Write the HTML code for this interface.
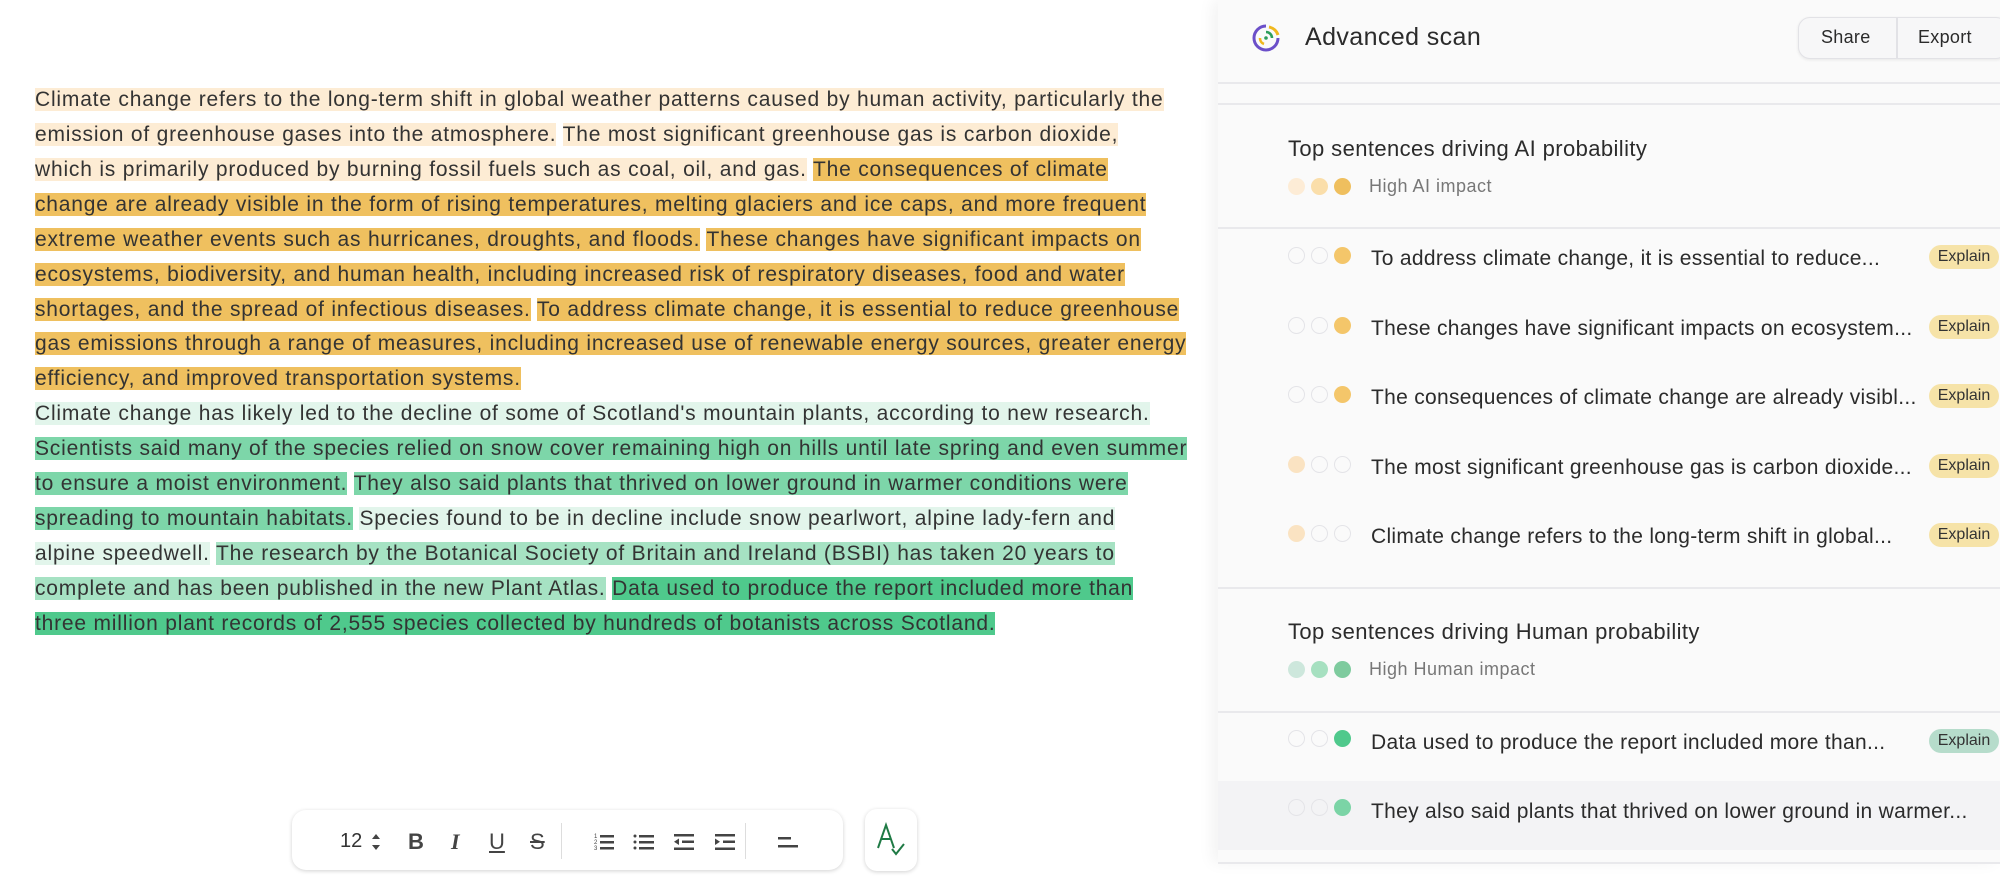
<!DOCTYPE html>
<html><head><meta charset="utf-8"><style>
*{margin:0;padding:0;box-sizing:border-box}
body{width:2000px;height:881px;background:#fff;position:relative;overflow:hidden;font-family:"Liberation Sans",sans-serif;color:#333}
.ln{position:absolute;left:35px;height:25px;line-height:25px;font-size:21px;letter-spacing:.8px;white-space:nowrap;color:#333}
.lo{background:#fdecd4}.or{background:#efc05f}.lg{background:#e2f5eb}.mg{background:#7dd6a9}.ml{background:#a6e2c3}.dg{background:#4fc98c}
#panel{position:absolute;left:1218px;top:0;width:782px;height:863px;background:#fafafa;box-shadow:-6px 0 14px rgba(0,0,0,.05)}
.hl{position:absolute;left:0;width:782px;height:2px;background:#e9e9ec}
.t{position:absolute;font-size:21px;letter-spacing:.3px;color:#2b2b2b;white-space:nowrap}
.h{font-size:22px;letter-spacing:.4px}
.s{font-size:18px;letter-spacing:.5px;color:#777}
.dot{position:absolute;width:17px;height:17px;border-radius:50%}
.e{border:1.5px solid #e4e4e8}
.exp{position:absolute;left:711px;width:70px;height:24px;border-radius:12px;font-size:16px;line-height:24px;text-align:center;color:#333}
.ic{position:absolute;top:828px}
</style></head><body>
<div class="ln" style="top:87px"><span class="lo">Climate change refers to the long-term shift in global weather patterns caused by human activity, particularly the</span></div>
<div class="ln" style="top:122px"><span class="lo">emission of greenhouse gases into the atmosphere.</span> <span class="lo">The most significant greenhouse gas is carbon dioxide,</span></div>
<div class="ln" style="top:157px"><span class="lo">which is primarily produced by burning fossil fuels such as coal, oil, and gas.</span> <span class="or">The consequences of climate</span></div>
<div class="ln" style="top:192px"><span class="or">change are already visible in the form of rising temperatures, melting glaciers and ice caps, and more frequent</span></div>
<div class="ln" style="top:227px"><span class="or">extreme weather events such as hurricanes, droughts, and floods.</span> <span class="or">These changes have significant impacts on</span></div>
<div class="ln" style="top:262px"><span class="or">ecosystems, biodiversity, and human health, including increased risk of respiratory diseases, food and water</span></div>
<div class="ln" style="top:297px"><span class="or">shortages, and the spread of infectious diseases.</span> <span class="or">To address climate change, it is essential to reduce greenhouse</span></div>
<div class="ln" style="top:331px"><span class="or">gas emissions through a range of measures, including increased use of renewable energy sources, greater energy</span></div>
<div class="ln" style="top:366px"><span class="or">efficiency, and improved transportation systems.</span></div>
<div class="ln" style="top:401px"><span class="lg">Climate change has likely led to the decline of some of Scotland's mountain plants, according to new research.</span></div>
<div class="ln" style="top:436px"><span class="mg">Scientists said many of the species relied on snow cover remaining high on hills until late spring and even summer</span></div>
<div class="ln" style="top:471px"><span class="mg">to ensure a moist environment.</span> <span class="mg">They also said plants that thrived on lower ground in warmer conditions were</span></div>
<div class="ln" style="top:506px"><span class="mg">spreading to mountain habitats.</span> <span class="lg">Species found to be in decline include snow pearlwort, alpine lady-fern and</span></div>
<div class="ln" style="top:541px"><span class="lg">alpine speedwell.</span> <span class="ml">The research by the Botanical Society of Britain and Ireland (BSBI) has taken 20 years to</span></div>
<div class="ln" style="top:576px"><span class="ml">complete and has been published in the new Plant Atlas.</span> <span class="dg">Data used to produce the report included more than</span></div>
<div class="ln" style="top:611px"><span class="dg">three million plant records of 2,555 species collected by hundreds of botanists across Scotland.</span></div>

<!-- toolbar -->
<div style="position:absolute;left:292px;top:810px;width:551px;height:60px;border-radius:14px;background:#fff;box-shadow:0 1px 4px rgba(0,0,0,.18)"></div>
<div style="position:absolute;left:865px;top:809px;width:52px;height:62px;border-radius:12px;background:#fff;box-shadow:0 1px 4px rgba(0,0,0,.18)"></div>
<div style="position:absolute;left:340px;top:830px;font-size:20px;color:#333">12</div>
<svg class="ic" style="left:368px" width="16" height="28" viewBox="0 0 16 28"><path d="M4 11 L8 6 L12 11Z M4 17 L8 22 L12 17Z" fill="#444"/></svg>
<div style="position:absolute;left:408px;top:829px;font-size:22px;font-weight:bold;color:#444">B</div>
<div style="position:absolute;left:451px;top:829px;font-size:22px;font-style:italic;font-family:'Liberation Serif',serif;font-weight:bold;color:#444">I</div>
<div style="position:absolute;left:489px;top:829px;font-size:22px;text-decoration:underline;color:#444">U</div>
<div style="position:absolute;left:530px;top:829px;font-size:22px;text-decoration:line-through;color:#444">S</div>
<div style="position:absolute;left:561px;top:823px;width:1px;height:36px;background:#ddd"></div>
<div style="position:absolute;left:745px;top:823px;width:1px;height:36px;background:#ddd"></div>
<svg class="ic" style="left:593px" width="22" height="28" viewBox="0 0 22 28"><g fill="#444"><rect x="7" y="7" width="14" height="2.5"/><rect x="7" y="13" width="14" height="2.5"/><rect x="7" y="19" width="14" height="2.5"/></g><text x="1" y="10" font-size="6" fill="#444">1</text><text x="1" y="16" font-size="6" fill="#444">2</text><text x="1" y="22" font-size="6" fill="#444">3</text></svg>
<svg class="ic" style="left:633px" width="22" height="28" viewBox="0 0 22 28"><g fill="#444"><circle cx="2" cy="8" r="1.5"/><circle cx="2" cy="14" r="1.5"/><circle cx="2" cy="20" r="1.5"/><rect x="6" y="7" width="15" height="2.5"/><rect x="6" y="13" width="15" height="2.5"/><rect x="6" y="19" width="15" height="2.5"/></g></svg>
<svg class="ic" style="left:673px" width="22" height="28" viewBox="0 0 22 28"><g fill="#444"><rect x="1" y="6" width="20" height="2.5"/><rect x="9" y="12.5" width="12" height="2.5"/><rect x="1" y="19.5" width="20" height="2.5"/><path d="M1 13.8 L6 10.5 L6 17Z"/></g></svg>
<svg class="ic" style="left:714px" width="22" height="28" viewBox="0 0 22 28"><g fill="#444"><rect x="1" y="6" width="20" height="2.5"/><rect x="9" y="12.5" width="12" height="2.5"/><rect x="1" y="19.5" width="20" height="2.5"/><path d="M6 13.8 L1 10.5 L1 17Z"/></g></svg>
<svg class="ic" style="left:777px" width="22" height="28" viewBox="0 0 22 28"><g fill="#444"><rect x="1" y="9" width="13" height="2.5"/><rect x="1" y="17" width="20" height="2.5"/></g></svg>
<svg style="position:absolute;left:875px;top:822px" width="34" height="36" viewBox="0 0 34 36"><path d="M3 26 L11 3 L19 26 M6 17 L16 17" stroke="#1f7a45" stroke-width="2" fill="none"/><path d="M17 27 L21 32 L29 22" stroke="#1f7a45" stroke-width="2" fill="none"/></svg>

<div id="panel">
  <svg style="position:absolute;left:34px;top:24px" width="28" height="28" viewBox="0 0 28 28"><path d="M14 2 A12 12 0 1 0 26 14" stroke="#6b4fc9" stroke-width="3" fill="none"/><path d="M17 3 A12 12 0 0 1 26 11" stroke="#f0b81e" stroke-width="3" fill="none"/><path d="M14 8 A6 6 0 0 1 20 14" stroke="#2e9e5a" stroke-width="2.6" fill="none"/><path d="M8 14 A6 6 0 0 0 12 20" stroke="#f0b81e" stroke-width="2.6" fill="none"/><circle cx="14" cy="14" r="1.8" fill="#2e9e5a"/></svg>
  <div class="t" style="left:87px;top:23px;font-size:25px;letter-spacing:.4px;color:#2b2b2b">Advanced scan</div>
  <div style="position:absolute;left:580px;top:17px;width:210px;height:42px;border:1.5px solid #e2e2e6;border-radius:12px;background:#f7f7f8;box-shadow:0 1px 3px rgba(0,0,0,.08)"></div>
  <div style="position:absolute;left:678px;top:18px;width:2px;height:40px;background:#e2e2e6"></div>
  <div class="t" style="left:603px;top:27px;font-size:18px">Share</div>
  <div class="t" style="left:700px;top:27px;font-size:18px">Export</div>
  <div class="hl" style="top:82px"></div>
  <div class="hl" style="top:103px;height:1.5px"></div>

  <div class="t h" style="left:70px;top:136px">Top sentences driving AI probability</div>
  <div class="dot" style="left:70px;top:178px;background:#fdecd6"></div>
  <div class="dot" style="left:93px;top:178px;background:#fadeaa"></div>
  <div class="dot" style="left:116px;top:178px;background:#efbf5e"></div>
  <div class="t s" style="left:151px;top:176px">High AI impact</div>
  <div class="hl" style="top:227px"></div>

  <div class="dot e" style="left:70px;top:247px"></div><div class="dot e" style="left:93px;top:247px"></div><div class="dot" style="left:116px;top:247px;background:#f4c66a"></div>
  <div class="t" style="left:153px;top:247px">To address climate change, it is essential to reduce...</div>
  <div class="exp" style="top:245px;background:#f6e3a8">Explain</div>

  <div class="dot e" style="left:70px;top:317px"></div><div class="dot e" style="left:93px;top:317px"></div><div class="dot" style="left:116px;top:317px;background:#f4c66a"></div>
  <div class="t" style="left:153px;top:317px">These changes have significant impacts on ecosystem...</div>
  <div class="exp" style="top:315px;background:#f6e3a8">Explain</div>

  <div class="dot e" style="left:70px;top:386px"></div><div class="dot e" style="left:93px;top:386px"></div><div class="dot" style="left:116px;top:386px;background:#f4c66a"></div>
  <div class="t" style="left:153px;top:386px">The consequences of climate change are already visibl...</div>
  <div class="exp" style="top:384px;background:#f6e3a8">Explain</div>

  <div class="dot" style="left:70px;top:456px;background:#fae3c2"></div><div class="dot e" style="left:93px;top:456px"></div><div class="dot e" style="left:116px;top:456px"></div>
  <div class="t" style="left:153px;top:456px">The most significant greenhouse gas is carbon dioxide...</div>
  <div class="exp" style="top:454px;background:#f6e3a8">Explain</div>

  <div class="dot" style="left:70px;top:525px;background:#fae3c2"></div><div class="dot e" style="left:93px;top:525px"></div><div class="dot e" style="left:116px;top:525px"></div>
  <div class="t" style="left:153px;top:525px">Climate change refers to the long-term shift in global...</div>
  <div class="exp" style="top:523px;background:#f6e3a8">Explain</div>

  <div class="hl" style="top:587px"></div>
  <div class="t h" style="left:70px;top:619px">Top sentences driving Human probability</div>
  <div class="dot" style="left:70px;top:661px;background:#cde7dc"></div>
  <div class="dot" style="left:93px;top:661px;background:#a6e0c0"></div>
  <div class="dot" style="left:116px;top:661px;background:#7ecb9e"></div>
  <div class="t s" style="left:151px;top:659px">High Human impact</div>
  <div class="hl" style="top:711px"></div>

  <div class="dot e" style="left:70px;top:730px"></div><div class="dot e" style="left:93px;top:730px"></div><div class="dot" style="left:116px;top:730px;background:#4fc98c"></div>
  <div class="t" style="left:153px;top:731px">Data used to produce the report included more than...</div>
  <div class="exp" style="top:729px;background:#b6dccb">Explain</div>

  <div style="position:absolute;left:0;top:781px;width:782px;height:69px;background:#f3f3f5"></div>
  <div class="dot e" style="left:70px;top:799px"></div><div class="dot e" style="left:93px;top:799px"></div><div class="dot" style="left:116px;top:799px;background:#7bd4a6"></div>
  <div class="t" style="left:153px;top:800px">They also said plants that thrived on lower ground in warmer...</div>
  <div class="hl" style="top:862px"></div>
</div>
</body></html>
